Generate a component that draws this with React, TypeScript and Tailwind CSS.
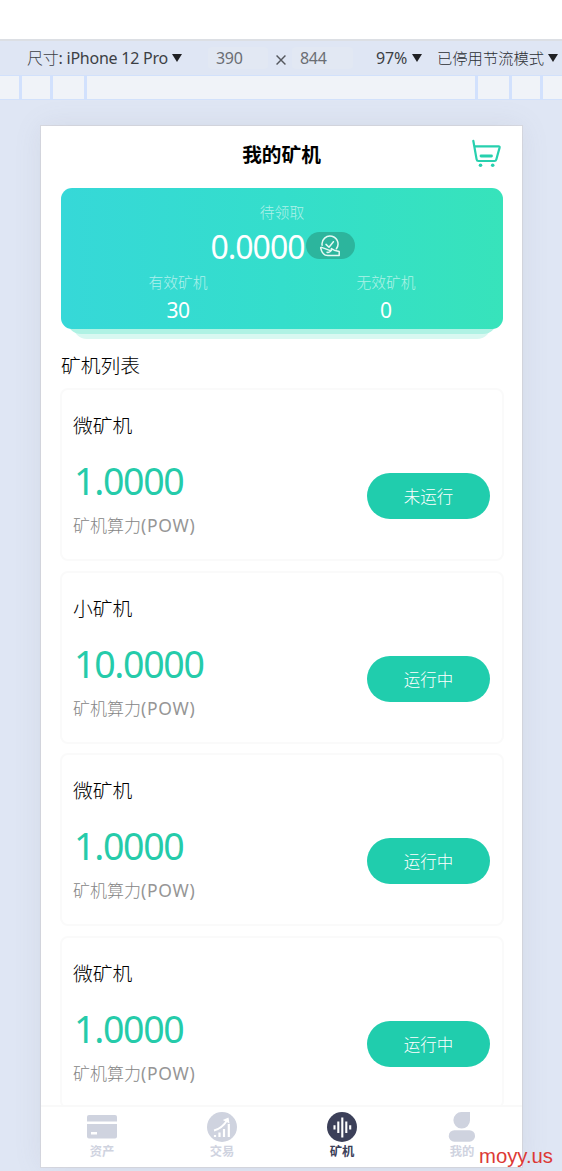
import React from 'react';

type Miner = {
  id: number;
  name: string;
  power: string;
  status: string;
};

const miners: Miner[] = [
  { id: 1, name: '微矿机', power: '1.0000', status: '未运行' },
  { id: 2, name: '小矿机', power: '10.0000', status: '运行中' },
  { id: 3, name: '微矿机', power: '1.0000', status: '运行中' },
  { id: 4, name: '微矿机', power: '1.0000', status: '运行中' },
];

const Caret = () => (
  <svg width="10" height="8" viewBox="0 0 10 8" className="shrink-0">
    <path d="M0 0h10L5 8z" fill="#202124" />
  </svg>
);

const DeviceToolbar = () => (
  <div className="flex h-9 shrink-0 items-center whitespace-nowrap border-t-2 border-[#dcdfe4] bg-[#dfe6f4] pl-[27px] text-[16px] leading-9 text-[#3c3f44]">
    <div className="flex w-[181px] items-center gap-1">
      <span className="w-[141px] tracking-[-0.24px]">
        <span className="font-light">尺寸</span>: iPhone 12 Pro
      </span>
      <Caret />
    </div>
    <div className="h-[22px] w-[60px] rounded-sm bg-[#e2e8f3] pl-2 leading-[22px] tracking-[-0.3px] text-[#6b6e73]">390</div>
    <svg width="10" height="10" viewBox="0 0 9 9" className="ml-2 mr-[6px] mt-1 shrink-0">
      <path d="M.5.5l8 8M8.5.5l-8 8" stroke="#55585e" strokeWidth="1.3" />
    </svg>
    <div className="h-[22px] w-[61px] rounded-sm bg-[#e2e8f3] pl-2 leading-[22px] tracking-[-0.3px] text-[#6b6e73]">844</div>
    <div className="ml-[23px] flex w-[61px] items-center gap-1">
      <span className="w-[32px] tracking-[-0.2px]">97%</span>
      <Caret />
    </div>
    <div className="flex items-center gap-1">
      <span className="w-[107px] text-[15.3px] font-light text-[#2b2e33]">已停用节流模式</span>
      <Caret />
    </div>
  </div>
);

const Ruler = () => (
  <div className="flex h-[25px] shrink-0 justify-between border-y border-[#d2e1fb] bg-[#f0f3f8]">
    <div className="flex w-[87px] justify-end">
      <div className="w-[31px] border-l-[3px] border-[#d2e1fd]" />
      <div className="w-[37px] border-x-[3px] border-[#d2e1fd]" />
    </div>
    <div className="flex w-[87px]">
      <div className="w-[34px] border-l-[3px] border-[#d2e1fd]" />
      <div className="w-[31px] border-l-[3px] border-[#d2e1fd]" />
      <div className="w-[22px] border-l-[3px] border-[#d2e1fd]" />
    </div>
  </div>
);

const CartIcon = () => (
  <svg width="30" height="29" viewBox="0 0 30 29" fill="none" stroke="#27d0ae" strokeWidth="2.2" strokeLinecap="round" strokeLinejoin="round">
    <path d="M1.3 1.8L4.6 20.4Q4.9 22 6.5 22H22.5Q23.9 22 24.3 20.5L27.6 8.6Q27.9 7.4 26.6 7.4H2.5" />
    <path d="M9 17H19.500" strokeWidth="2.8" />
    <circle cx="8.500" cy="26.300" r="1.8" fill="#27d0ae" stroke="none" />
    <circle cx="20.700" cy="26.300" r="1.8" fill="#27d0ae" stroke="none" />
  </svg>
);

const ClaimIcon = () => (
  <svg width="22" height="22" viewBox="0 0 22 22" fill="none" stroke="#e4faf4" strokeWidth="1.5" strokeLinecap="round" strokeLinejoin="round">
    <path d="M3.1 10.2A8 8 0 1 1 17.4 13.8" />
    <path d="M7 9.4L10 12.2 14.4 6.7" />
    <path d="M1.8 13.3Q1.4 12.2 2.6 12.4L8 14.4Q10.8 15.8 12.4 15.2V13.6L15.2 15.2L20.2 16.4V20.6H8.8Q3.2 20.2 1.8 13.3Z" />
    <path d="M8 17.3Q10.5 18 12.4 15.4" />
  </svg>
);

const Summary = () => (
  <div className="ml-[20px] mr-[19px] flex flex-col">
    <div className="z-20 flex h-[141px] flex-col rounded-[11px] bg-linear-to-r from-[#36d8d8] via-[#34decb] to-[#37e3bb] px-[13px] pt-[14px] text-white">
      <div className="text-center text-[14.8px] font-light leading-[21px] text-white/60">待领取</div>
      <div className="flex h-[48px] items-center justify-center">
        <span className="ml-px text-[32px] leading-[48px] tracking-[-1px]">0.0000</span>
        <button className="mb-[3px] ml-px flex h-[27px] w-[49px] items-center justify-center rounded-full bg-[#2cb59d]">
          <ClaimIcon />
        </button>
      </div>
      <div className="grid grid-cols-2 text-center">
        <div>
          <div className="text-[14.8px] font-light leading-[22px] text-white/60">有效矿机</div>
          <div className="text-[21px] leading-[34px] tracking-[-0.6px]">30</div>
        </div>
        <div>
          <div className="text-[14.8px] font-light leading-[22px] text-white/60">无效矿机</div>
          <div className="text-[21px] leading-[34px]">0</div>
        </div>
      </div>
    </div>
    <div className="z-10 mx-[6px] -mt-[15px] h-5 rounded-b-[14px] bg-[#aff2e4]" />
    <div className="mx-[12px] -mt-[15px] h-5 rounded-b-[14px] bg-[#d8f8f1]" />
  </div>
);

const MinerCard = ({ miner }: { miner: Miner }) => (
  <div className="flex h-[173px] shrink-0 justify-between rounded-lg border-2 border-[#fafafa] pl-[11px] pr-[12px]">
    <div className="flex flex-col pt-[21px]">
      <div className="text-[19.8px] font-light leading-[30px] text-black">{miner.name}</div>
      <div className="mt-[12px] h-[56px] pl-px text-[37.5px] leading-[56px] tracking-[-1.3px] text-[#25cbaa]">{miner.power}</div>
      <div className="mt-[3px] text-[17px] font-light leading-[26px] text-[#858585]">
        矿机算力<span className="text-[17.5px] font-normal tracking-[0.7px] text-[#969696]">(POW)</span>
      </div>
    </div>
    <button className="mt-[83px] h-[46px] w-[123px] rounded-full bg-[#20cdad] pt-px text-[16.5px] font-light leading-[46px] text-white">
      {miner.status}
    </button>
  </div>
);

const AssetsIcon = () => (
  <svg width="30" height="30" viewBox="0 0 30 30" fill="#cfd3df">
    <path d="M2 3H28Q30 3 30 5V9.5H0V5Q0 3 2 3Z" />
    <path fillRule="evenodd" d="M0 12H30V24.500Q30 26.500 28 26.500H2Q0 26.500 0 24.500ZM4 20V22.500H10V20Z" />
  </svg>
);

const TradeIcon = () => (
  <svg width="30" height="30" viewBox="0 0 30 30" fill="none" stroke="#fff">
    <circle cx="15" cy="15" r="15" fill="#cfd3df" stroke="none" />
    <path d="M8 25V23M12.500 25V20.500M17 25V17M21.800 25V12" strokeWidth="2.2" />
    <path d="M7 18.500Q15 16.500 20 8.500" strokeWidth="1.9" />
    <path d="M15.800 8L21.500 5.500 22.500 11.500Z" fill="#fff" stroke="none" />
  </svg>
);

const MinerIcon = () => (
  <svg width="30" height="30" viewBox="0 0 30 30">
    <circle cx="15" cy="15" r="15" fill="#3c4059" />
    <path d="M7.500 13.200V17.500M11.300 9.500V21M15.300 5.500V25.500M19.300 9.500V21M23.200 13.200V17.500" stroke="#fff" strokeWidth="2.1" />
  </svg>
);

const MineIcon = () => (
  <svg width="30" height="30" viewBox="0 0 30 30" fill="#cfd3df">
    <path d="M15 0H23V8.300A8.300 8.300 0 1 1 15 0Z" />
    <rect x="1.800" y="18.200" width="26.200" height="11.500" rx="5.500" />
  </svg>
);

const tabs = [
  { label: '资产', icon: <AssetsIcon />, active: false },
  { label: '交易', icon: <TradeIcon />, active: false },
  { label: '矿机', icon: <MinerIcon />, active: true },
  { label: '我的', icon: <MineIcon />, active: false },
];

const TabBar = () => (
  <nav className="grid h-[62px] shrink-0 grid-cols-4 border-t-2 border-[#f9f9f9] bg-white pl-px">
    {tabs.map((tab) => (
      <div
        key={tab.label}
        className={`flex flex-col items-center gap-px pt-[5px] text-[12.3px] font-bold leading-[18px] ${tab.active ? 'text-[#3c4059]' : 'text-[#cfd3df]'}`}
      >
        {tab.icon}
        <span>{tab.label}</span>
      </div>
    ))}
  </nav>
);

export default function App() {
  return (
    <div className="relative flex h-[1171px] w-[562px] flex-col overflow-hidden bg-[#dfe6f4] font-['Noto_Sans','Noto_Sans_CJK_SC',sans-serif]">
      <div className="h-[39px] shrink-0 bg-white" />
      <DeviceToolbar />
      <Ruler />
      <div className="ml-[41px] mt-[26px] flex h-[1041px] w-[481px] shrink-0 flex-col overflow-hidden bg-white shadow-[0_0_26px_rgba(120,120,140,0.12),0_0_0_1px_#d8dae2]">
        <header className="grid h-[62px] shrink-0 grid-cols-[60px_1fr_60px] items-start">
          <h1 className="col-start-2 text-center text-[19.7px] font-bold leading-[58px] text-black">我的矿机</h1>
          <div className="pl-[10px] pt-[13px]">
            <CartIcon />
          </div>
        </header>
        <Summary />
        <h2 className="ml-[20px] mt-[12px] shrink-0 text-[19.8px] font-light leading-[30px] text-black">矿机列表</h2>
        <div className="ml-[19px] mr-[18px] mt-[7px] flex min-h-0 flex-1 flex-col gap-[9.5px] overflow-hidden">
          {miners.map((miner) => (
            <MinerCard key={miner.id} miner={miner} />
          ))}
        </div>
        <TabBar />
      </div>
      <div className="absolute bottom-[3px] right-[9px] font-['Liberation_Sans',sans-serif] text-[20.3px] leading-6 text-[#dc3936]">moyy.us</div>
    </div>
  );
}
